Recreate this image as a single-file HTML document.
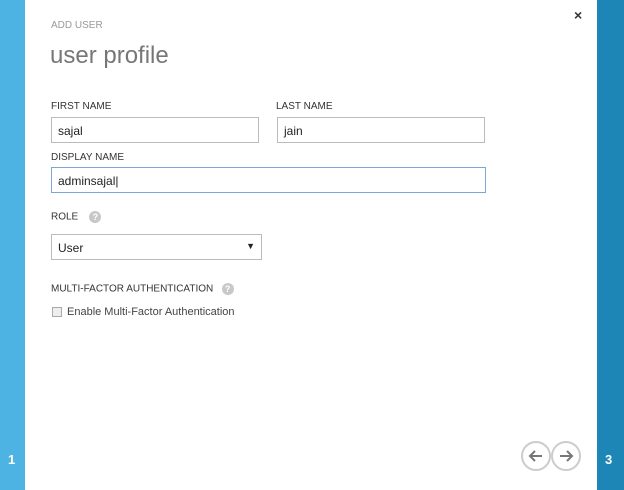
<!DOCTYPE html>
<html><head><style>
*{margin:0;padding:0;box-sizing:border-box}
body{width:624px;height:490px;position:relative;background:#fff;font-family:"Liberation Sans",sans-serif;overflow:hidden;color:#333}
.a{position:absolute}
.lbl{font-size:10px;color:#333}
.inp{position:absolute;border:1px solid #bbb;height:26px;font-size:12px;padding:6px 0 0 6px;color:#222}
.q{display:inline-block;width:12px;height:12px;border-radius:50%;background:#c8c8c8;color:#fff;font-size:9px;font-weight:bold;text-align:center;line-height:12px;vertical-align:middle}
.c{position:absolute;width:30px;height:30px;border:2px solid #ccc;border-radius:50%}
</style></head><body>
<div class="a" style="left:0;top:0;width:25px;height:490px;background:#4db3e2"></div>
<div class="a" style="left:8px;top:452px;color:#fff;font-size:13px;font-weight:bold">1</div>
<div class="a" style="left:597px;top:0;width:27px;height:490px;background:#1d86b6"></div>
<div class="a" style="left:605px;top:452px;color:#fff;font-size:13px;font-weight:bold">3</div>
<div class="a" style="left:574px;top:7px;font-size:14px;font-weight:bold;color:#333">×</div>
<div class="a" style="left:51px;top:20px;font-size:10px;color:#999">ADD USER</div>
<div class="a" style="left:50px;top:42px;font-size:24px;color:#777">user profile</div>
<div class="a lbl" style="left:51px;top:101px">FIRST NAME</div>
<div class="inp" style="left:51px;top:117px;width:208px">sajal</div>
<div class="a lbl" style="left:276px;top:101px">LAST NAME</div>
<div class="inp" style="left:277px;top:117px;width:208px">jain</div>
<div class="a lbl" style="left:51px;top:152px">DISPLAY NAME</div>
<div class="inp" style="left:51px;top:167px;width:435px;border-color:#7ea6d6">adminsajal|</div>
<div class="a lbl" style="left:51px;top:211px">ROLE &nbsp; &nbsp;<span class="q">?</span></div>
<div class="inp" style="left:51px;top:234px;width:211px">User<span style="position:absolute;right:6px;top:6px;font-size:9px">▼</span></div>
<div class="a lbl" style="left:51px;top:283px">MULTI-FACTOR AUTHENTICATION &nbsp; <span class="q">?</span></div>
<div class="a" style="left:52px;top:307px;width:10px;height:10px;border:1px solid #aaa;background:#eee"></div>
<div class="a" style="left:67px;top:306px;font-size:11px;color:#444">Enable Multi-Factor Authentication</div>
<div class="c" style="left:521px;top:441px"></div>
<div class="c" style="left:551px;top:441px"></div>
<svg class="a" style="left:521px;top:441px" width="60" height="30"><g stroke="#777" stroke-width="2" fill="none"><path d="M21 15H9M14 10L9 15L14 20"/><path d="M39 15H51M46 10L51 15L46 20"/></g></svg>
</body></html>
